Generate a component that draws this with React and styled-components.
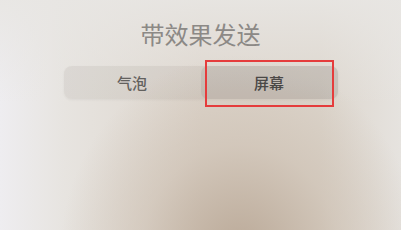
import styled, { createGlobalStyle } from "styled-components";

const GlobalStyle = createGlobalStyle`
  html, body {
    margin: 0;
    padding: 0;
  }
  body {
    font-family: "Noto Sans CJK SC", "Noto Sans", sans-serif;
  }
`;

export default function App() {
  return (
    <>
      <GlobalStyle />
      <Screen>
        <Title>带效果发送</Title>
        <Segmented>
          <Segment>气泡</Segment>
          <Segment $active $marked>
            屏幕
          </Segment>
        </Segmented>
      </Screen>
    </>
  );
}

const Screen = styled.div`
  width: 401px;
  height: 230px;
  overflow: hidden;
  display: flex;
  flex-direction: column;
  align-items: center;
  background:
    radial-gradient(ellipse 180px 200px at 240px 255px, rgba(184, 166, 148, 0.95), rgba(202, 188, 173, 0.55) 55%, rgba(220, 212, 204, 0) 100%),
    linear-gradient(180deg, rgba(232, 230, 227, 0.9) 0%, rgba(232, 230, 227, 0) 45%),
    linear-gradient(90deg, #eeedf0 0%, #e7e4e0 16%, #ddd5cc 50%, #dcd5cc 80%, #e6e3df 100%);
`;

const Title = styled.h1`
  margin: 19px 0 0;
  font-size: 24px;
  line-height: 30px;
  font-weight: 400;
  color: #8c8986;
`;

const Segmented = styled.div`
  margin-top: 17px;
  width: 274px;
  height: 33px;
  display: flex;
  border-radius: 8px;
  background: rgba(120, 110, 100, 0.1);
  box-shadow: 0 1px 3px rgba(0, 0, 0, 0.05);
`;

const Segment = styled.div`
  position: relative;
  flex: 1;
  display: flex;
  align-items: center;
  justify-content: center;
  font-size: 15px;
  font-weight: 500;
  color: ${(p) => (p.$active ? "#4a4846" : "#63615e")};
  border-radius: 7px;
  background: ${(p) => (p.$active ? "rgba(90, 82, 75, 0.1)" : "transparent")};

  &::after {
    content: "";
    display: ${(p) => (p.$marked ? "block" : "none")};
    position: absolute;
    left: 4px;
    right: 4px;
    top: -6px;
    bottom: -8px;
    border: 2px solid #e53c3c;
  }
`;
